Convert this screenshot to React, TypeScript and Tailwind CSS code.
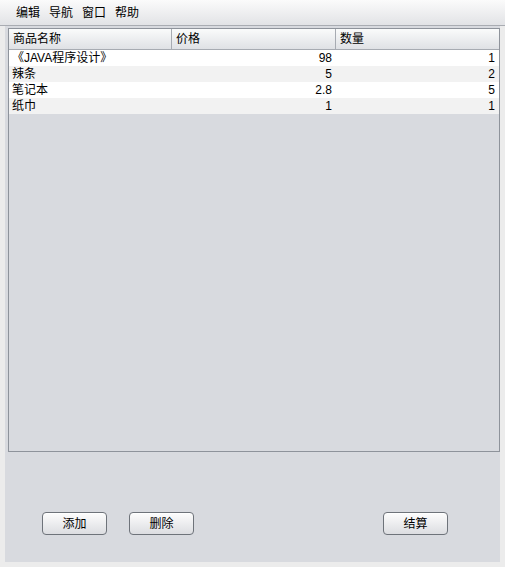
import React from "react";

const rows = [
  { name: "《JAVA程序设计》", price: "98", qty: "1" },
  { name: "辣条", price: "5", qty: "2" },
  { name: "笔记本", price: "2.8", qty: "5" },
  { name: "纸巾", price: "1", qty: "1" },
];

const font = { fontFamily: '"Liberation Sans", "Noto Sans CJK SC", sans-serif' };

function Btn({ label }: { label: string }) {
  return (
    <button className="w-[65px] h-[23px] rounded-[4px] border border-[#6e737a] bg-gradient-to-b from-[#fdfdfd] to-[#dcdde1] text-[12px] text-black leading-none flex items-center justify-center shadow-[inset_0_1px_0_#ffffff]">
      {label}
    </button>
  );
}

export default function App() {
  return (
    <div className="w-[505px] h-[567px] flex flex-col bg-[#ececec] text-[12px] text-black" style={font}>
      <div className="h-[26px] shrink-0 flex items-center pl-[16px] gap-[9px] bg-gradient-to-b from-[#fbfbfb] to-[#e2e3e6] border-b border-[#a9acb2]">
        <span>编辑</span>
        <span>导航</span>
        <span>窗口</span>
        <span>帮助</span>
      </div>
      <div className="flex-1 flex flex-col mx-[5px] mb-[5px] bg-[#d8dadf] pl-[3px] pt-[2px]">
        <div className="h-[424px] border border-[#8e939b] bg-[#d8dadf] flex flex-col">
          <div className="h-[21px] flex bg-gradient-to-b from-[#fafbfb] to-[#dfe1e5] border-b border-[#a7abb2]">
            <div className="w-[163px] border-r border-[#a7abb2] pl-[4px] flex items-center">商品名称</div>
            <div className="w-[164px] border-r border-[#a7abb2] pl-[4px] flex items-center">价格</div>
            <div className="flex-1 pl-[4px] flex items-center">数量</div>
          </div>
          {rows.map((r, i) => (
            <div key={i} className={`h-[16px] flex items-center ${i % 2 === 0 ? "bg-white" : "bg-[#f2f2f2]"}`}>
              <div className="w-[163px] pl-[3px] leading-none">{r.name}</div>
              <div className="w-[164px] pr-[4px] text-right leading-none">{r.price}</div>
              <div className="flex-1 pr-[4px] text-right leading-none">{r.qty}</div>
            </div>
          ))}
        </div>
        <div className="flex mt-[60px] pl-[34px]">
          <Btn label="添加" />
          <div className="w-[22px]" />
          <Btn label="删除" />
          <div className="w-[189px]" />
          <Btn label="结算" />
        </div>
      </div>
    </div>
  );
}
